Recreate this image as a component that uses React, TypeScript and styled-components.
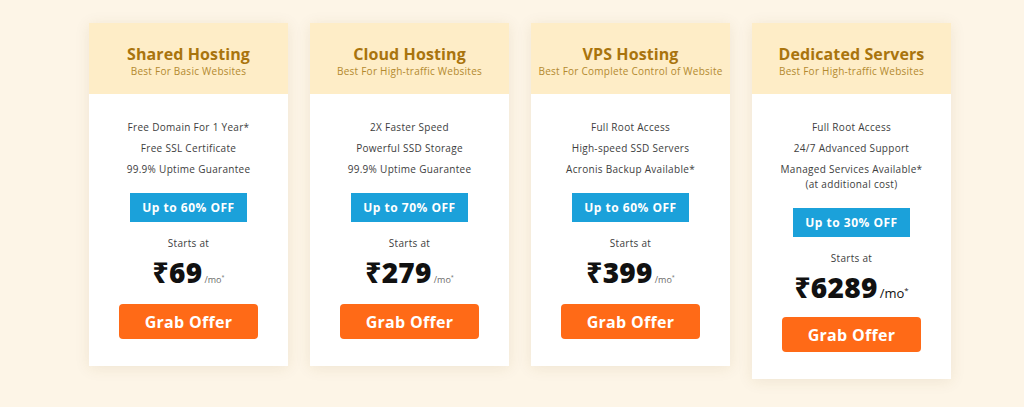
import styled, { createGlobalStyle } from "styled-components";

const GlobalStyle = createGlobalStyle`
    * { box-sizing: border-box; }
    body {
        margin: 0;
        background: #fdf5e7;
        font-family: "Open Sans", "Noto Sans", sans-serif;
    }
`;

interface Plan {
    title: string;
    subtitle: string;
    features: string[][];
    discount: string;
    price: string;
    bigUnit?: boolean;
}

const plans: Plan[] = [
    {
        title: "Shared Hosting",
        subtitle: "Best For Basic Websites",
        features: [["Free Domain For 1 Year*"], ["Free SSL Certificate"], ["99.9% Uptime Guarantee"]],
        discount: "Up to 60% OFF",
        price: "₹69"
    },
    {
        title: "Cloud Hosting",
        subtitle: "Best For High-traffic Websites",
        features: [["2X Faster Speed"], ["Powerful SSD Storage"], ["99.9% Uptime Guarantee"]],
        discount: "Up to 70% OFF",
        price: "₹279"
    },
    {
        title: "VPS Hosting",
        subtitle: "Best For Complete Control of Website",
        features: [["Full Root Access"], ["High-speed SSD Servers"], ["Acronis Backup Available*"]],
        discount: "Up to 60% OFF",
        price: "₹399"
    },
    {
        title: "Dedicated Servers",
        subtitle: "Best For High-traffic Websites",
        features: [
            ["Full Root Access"],
            ["24/7 Advanced Support"],
            ["Managed Services Available*", "(at additional cost)"]
        ],
        discount: "Up to 30% OFF",
        price: "₹6289",
        bigUnit: true
    }
];

const Page = styled.div`
    padding: 23px 0 28px 89px;
    display: flex;
    align-items: flex-start;
    gap: 22px;
`;

const Card = styled.div`
    width: 199px;
    background: #ffffff;
    box-shadow: 0 2px 14px rgba(120, 90, 30, 0.1);
    display: flex;
    flex-direction: column;
`;

const Header = styled.div`
    background: #feedc7;
    height: 71px;
    padding-top: 21px;
    text-align: center;
`;

const Title = styled.h3`
    margin: 0;
    font-size: 16px;
    line-height: 20px;
    font-weight: 700;
    color: #a9740d;
    letter-spacing: 0.1px;
`;

const Subtitle = styled.p`
    margin: 0;
    font-size: 10px;
    line-height: 14px;
    color: #b3892e;
    letter-spacing: 0.25px;
`;

const Body = styled.div`
    padding: 26px 10px 27px;
    display: flex;
    flex-direction: column;
    align-items: center;
    text-align: center;
`;

const Features = styled.ul`
    list-style: none;
    margin: 0;
    padding: 0;
    display: flex;
    flex-direction: column;
    gap: 6px;
`;

const Feature = styled.li`
    font-size: 10px;
    line-height: 15px;
    color: #3d3d3d;
    letter-spacing: 0.3px;
`;

const Discount = styled.div`
    margin-top: 16px;
    height: 29px;
    width: 117px;
    background: #1ba1da;
    color: #ffffff;
    font-size: 12px;
    font-weight: 700;
    letter-spacing: 0.5px;
    display: flex;
    align-items: center;
    justify-content: center;
`;

const StartsAt = styled.div`
    margin-top: 14px;
    font-size: 10px;
    line-height: 14px;
    color: #3d3d3d;
    letter-spacing: 0.3px;
`;

const PriceRow = styled.div`
    margin-top: 6px;
    display: flex;
    align-items: baseline;
    line-height: 32px;
`;

const Amount = styled.span`
    font-size: 28px;
    font-weight: 800;
    color: #111111;
    letter-spacing: 0.3px;
`;

const Unit = styled.span<{ $big?: boolean }>`
    margin-left: 2px;
    font-size: ${({ $big }) => ($big ? "13px" : "9px")};
    color: ${({ $big }) => ($big ? "#111111" : "#6b6b6b")};

    sup {
        font-size: 0.6em;
    }
`;

const GrabButton = styled.button`
    margin-top: 8px;
    width: 139px;
    height: 35px;
    border: none;
    border-radius: 4px;
    background: #ff6a17;
    color: #ffffff;
    font-family: inherit;
    font-size: 16px;
    font-weight: 700;
    letter-spacing: 0.3px;
    cursor: pointer;
`;

export default function App() {
    return (
        <>
            <GlobalStyle />
            <Page>
                {plans.map((plan) => (
                    <Card key={plan.title}>
                        <Header>
                            <Title>{plan.title}</Title>
                            <Subtitle>{plan.subtitle}</Subtitle>
                        </Header>
                        <Body>
                            <Features>
                                {plan.features.map((lines) => (
                                    <Feature key={lines[0]}>
                                        {lines.map((line) => (
                                            <div key={line}>{line}</div>
                                        ))}
                                    </Feature>
                                ))}
                            </Features>
                            <Discount>{plan.discount}</Discount>
                            <StartsAt>Starts at</StartsAt>
                            <PriceRow>
                                <Amount>{plan.price}</Amount>
                                <Unit $big={plan.bigUnit}>
                                    /mo<sup>*</sup>
                                </Unit>
                            </PriceRow>
                            <GrabButton>Grab Offer</GrabButton>
                        </Body>
                    </Card>
                ))}
            </Page>
        </>
    );
}
